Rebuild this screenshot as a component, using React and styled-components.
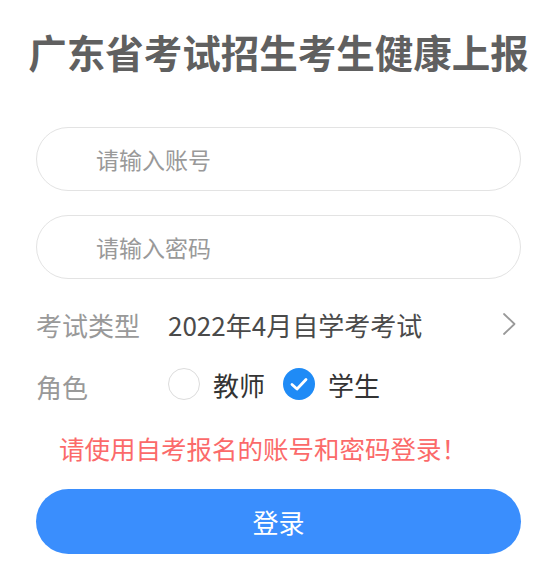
import React, { useState } from "react";
import styled, { createGlobalStyle } from "styled-components";

const Global = createGlobalStyle`
  html, body { margin: 0; padding: 0; background: #fff; }
  body { font-family: "Noto Sans CJK SC", "Noto Sans", sans-serif; }
  * { box-sizing: border-box; }
`;

const Page = styled.div`
  width: 555px;
  padding: 32px 34px 0 36px;
  display: flex;
  flex-direction: column;
`;

const Title = styled.h1`
  margin: 0 -30px;
  font-size: 38.5px;
  line-height: 39px;
  font-weight: 700;
  color: #606060;
  text-align: center;
  white-space: nowrap;
`;

const Form = styled.div`
  margin-top: 56px;
  display: flex;
  flex-direction: column;
  gap: 24px;
`;

const Input = styled.input`
  height: 64px;
  width: 100%;
  border: 1px solid #e3e3e3;
  border-radius: 32px;
  padding: 0 0 0 59px;
  font-family: inherit;
  font-size: 23px;
  color: #333;
  outline: none;
  background: #fff;
  &::placeholder { color: #999; }
`;

const Row = styled.div`
  height: 48px;
  display: flex;
  align-items: center;
  margin-top: ${(p) => p.$mt || 0}px;
`;

const Label = styled.div`
  width: 132px;
  flex: none;
  font-size: 26px;
  color: #999;
  padding-top: ${(p) => (p.$low ? 5 : 0)}px;
`;

const Value = styled.div`
  flex: 1;
  font-size: 26px;
  color: #4a4a4a;
`;

const Chevron = styled.svg`
  width: 14px;
  height: 24px;
  margin-right: 5px;
  flex: none;
`;

const Option = styled.label`
  display: flex;
  align-items: center;
  gap: 13px;
  margin-right: 18px;
  font-size: 26px;
  color: #333;
  cursor: pointer;
`;

const Circle = styled.span`
  width: 32px;
  height: 32px;
  border-radius: 50%;
  flex: none;
  display: flex;
  align-items: center;
  justify-content: center;
  border: ${(p) => (p.$on ? "none" : "1.5px solid #dcdcdc")};
  background: ${(p) => (p.$on ? "#1f8bf6" : "#fff")};
`;

const Hint = styled.div`
  margin-top: 24px;
  padding-left: 23px;
  font-size: 25.5px;
  line-height: 32px;
  color: #fb6a6a;
  white-space: nowrap;
`;

const Button = styled.button`
  margin-top: 25px;
  height: 65px;
  width: 100%;
  border: none;
  border-radius: 33px;
  background: #3a8efd;
  color: #fff;
  font-family: inherit;
  font-size: 26px;
  cursor: pointer;
`;

const Check = () => (
  <svg width="22" height="22" viewBox="0 0 22 22">
    <polyline points="4,11.5 9,16 18,6.5" fill="none" stroke="#fff" strokeWidth="2.8" strokeLinecap="round" strokeLinejoin="round" />
  </svg>
);

export default function App() {
  const [role, setRole] = useState("student");
  return (
    <>
      <Global />
      <Page>
        <Title>广东省考试招生考生健康上报</Title>
        <Form>
          <Input placeholder="请输入账号" />
          <Input placeholder="请输入密码" type="password" />
        </Form>
        <Row $mt={21}>
          <Label>考试类型</Label>
          <Value>2022年4月自学考考试</Value>
          <Chevron viewBox="0 0 14 24">
            <polyline points="2,2 12.5,12 2,22" fill="none" stroke="#999" strokeWidth="1.8" strokeLinecap="round" strokeLinejoin="round" />
          </Chevron>
        </Row>
        <Row $mt={12}>
          <Label $low>角色</Label>
          <Option onClick={() => setRole("teacher")}>
            <Circle $on={role === "teacher"}>{role === "teacher" && <Check />}</Circle>
            教师
          </Option>
          <Option onClick={() => setRole("student")}>
            <Circle $on={role === "student"}>{role === "student" && <Check />}</Circle>
            学生
          </Option>
        </Row>
        <Hint>请使用自考报名的账号和密码登录！</Hint>
        <Button>登录</Button>
      </Page>
    </>
  );
}
